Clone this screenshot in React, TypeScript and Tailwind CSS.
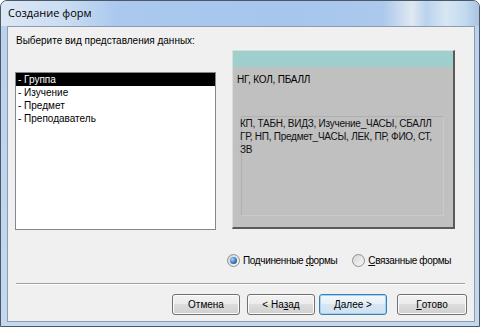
import React from 'react'

const ui = { fontFamily: '"Liberation Sans", Arial, sans-serif' }

function Radio({ checked }: { checked?: boolean }) {
  return (
    <div className="w-[13px] h-[13px] rounded-full border border-[#8f8f8f] bg-[linear-gradient(135deg,#d4d4d4,#f8f8f8)] flex items-center justify-center shrink-0">
      {checked && (
        <div className="w-[7px] h-[7px] rounded-full bg-[radial-gradient(circle_at_35%_35%,#a8d4f8,#2d6eb8_60%,#1b4f8e)]" />
      )}
    </div>
  )
}

function Btn({ children, focus, w = 'w-[68px]' }: { children: React.ReactNode; focus?: boolean; w?: string }) {
  return (
    <div
      className={`${w} h-[21px] rounded-[3px] border flex items-center justify-center text-[10px] text-black whitespace-nowrap ${
        focus
          ? 'border-[#3c7fb1] bg-[linear-gradient(#f2f7fb,#e6f0f8_50%,#d7e6f3_50%,#cfe0f0)] shadow-[inset_0_0_0_1px_#9fd4f7]'
          : 'border-[#707070] bg-[linear-gradient(#f2f2f2,#ebebeb_50%,#dddddd_50%,#cfcfcf)] shadow-[inset_0_0_0_1px_#fcfcfc]'
      }`}
    >
      {children}
    </div>
  )
}

export default function App() {
  const items = ['- Группа', '- Изучение', '- Предмет', '- Преподаватель']

  return (
    <div className="w-[480px] h-[327px] bg-white" style={ui}>
      <div className="w-full h-full rounded-t-[7px] border border-[#4b5866] bg-[#bad2ee] flex flex-col overflow-hidden">
        {/* Title bar */}
        <div className="h-[25px] shrink-0 flex items-center pl-[7px] bg-[linear-gradient(90deg,#dbe7f5_0%,#c9dcf2_14%,#abc9ee_24%,#a6c6ee_60%,#acc9ec_80%,#dfe8f2_86%,#b9d3ee_89%,#d7e6f2_93%,#c3dbf0_97%,#a9c4e2_100%)]">
          <span className="text-[11px] text-black whitespace-nowrap" style={{ fontFamily: '"Open Sans", "Noto Sans", sans-serif' }}>
            Создание форм
          </span>
        </div>

        {/* Frame body */}
        <div className="flex-1 min-h-0 flex pl-[6px] pr-[5px] pb-[4px] bg-[linear-gradient(#bad2ee,#c4d9f0)]">
          <div className="flex-1 border border-[#8d9cad] bg-[#f0f0f0] flex flex-col px-[7px] pt-[7px] pb-[5px] text-[10px] text-black whitespace-nowrap">
            <div className="flex items-start">
              {/* Left column */}
              <div className="flex flex-col">
                <div className="pl-[1px] leading-[13px]">Выберите вид представления данных:</div>
                <div className="mt-[25px] w-[201px] h-[158px] border border-[#828790] bg-white flex flex-col">
                  {items.map((t, i) => (
                    <div
                      key={t}
                      className={`h-[13px] leading-[13px] pl-[2px] ${i === 0 ? 'bg-black text-white' : ''}`}
                    >
                      {t}
                    </div>
                  ))}
                </div>
              </div>

              {/* Preview panel */}
              <div className="mt-[16px] ml-[16px] w-[223px] h-[179px] border-l border-t border-[#dcdcdc] border-r-2 border-b-2 border-r-[#5a5a5a] border-b-[#5a5a5a] bg-[#c0c0c0] flex flex-col">
                <div className="h-[16px] bg-[#9dcfcc]" />
                <div className="pl-[4px] mt-[6px] leading-[13px] tracking-[-0.2px]">НГ, КОЛ, ПБАЛЛ</div>
                <div className="mt-[30px] ml-[8px] mr-[9px] h-[100px] border border-t-[#b0b0b0] border-l-[#b0b0b0] border-r-[#cacaca] border-b-[#cacaca] leading-[13px] text-[#111] tracking-[-0.25px]">
                  <div className="-ml-[2px]">КП, ТАБН, ВИДЗ, Изучение_ЧАСЫ, СБАЛЛ</div>
                  <div className="-ml-[2px]">ГР, НП, Предмет_ЧАСЫ, ЛЕК, ПР, ФИО, СТ,</div>
                  <div className="-ml-[2px]">ЗВ</div>
                </div>
              </div>
            </div>

            {/* Radios */}
            <div className="mt-[24px] ml-[212px] flex items-center leading-[13px] tracking-[-0.35px]">
              <Radio checked />
              <span className="ml-[3px]">
                Подчиненные <u>ф</u>ормы
              </span>
              <div className="ml-[15px]">
                <Radio />
              </div>
              <span className="ml-[3px]">
                <u>С</u>вязанные формы
              </span>
            </div>

            {/* Separator */}
            <div className="mt-[16px] ml-[1px] mr-[2px] border-t border-[#a0a0a0] border-b border-b-white" />

            {/* Buttons */}
            <div className="mt-[9px] flex">
              <div className="ml-[157px]">
                <Btn>Отмена</Btn>
              </div>
              <div className="ml-[7px]">
                <Btn>
                  &lt; На<u>з</u>ад
                </Btn>
              </div>
              <div className="ml-[4px]">
                <Btn focus>
                  <u>Д</u>алее &gt;
                </Btn>
              </div>
              <div className="ml-[10px]">
                <Btn w="w-[70px]">
                  <u>Г</u>отово
                </Btn>
              </div>
            </div>
          </div>
        </div>
      </div>
    </div>
  )
}
